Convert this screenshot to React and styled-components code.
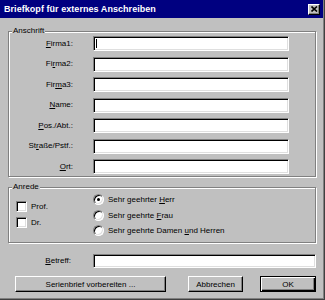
import React from 'react';
import styled, {createGlobalStyle} from 'styled-components';

const GlobalStyle = createGlobalStyle`
    html, body {
        margin: 0;
        padding: 0;
        background: #c0c0c0;
    }
    body {
        font-family: "Liberation Sans", Arial, sans-serif;
        font-size: 8px;
        color: #000;
    }
`

const Window = styled.div`
    width: 325px;
    height: 300px;
    box-sizing: border-box;
    background: #c0c0c0;
    display: flex;
    flex-direction: column;
    box-shadow: inset -1px -1px 0 #404040, inset -2px -2px 0 #808080;
    overflow: hidden;
`
const TitleBar = styled.div`
    height: 18px;
    margin-right: 2px;
    background: #000080;
    display: flex;
    align-items: center;
    justify-content: space-between;
    padding: 0 3px 0 4px;
`
const Title = styled.span`
    color: #fff;
    font-weight: bold;
    font-size: 9px;
    letter-spacing: 0.05px;
`
const CloseBox = styled.div`
    width: 12px;
    height: 11px;
    box-sizing: border-box;
    background: #c0c0c0;
    border: 1px solid;
    border-color: #fff #000 #000 #fff;
    box-shadow: inset -1px -1px 0 #808080;
    display: flex;
    align-items: center;
    justify-content: center;
`
const Body = styled.div`
    display: flex;
    flex-direction: column;
    padding: 13px 9px 0 8px;
`
const Group = styled.div`
    position: relative;
    box-sizing: border-box;
    height: ${p => p.$h}px;
    margin-top: ${p => p.$mt || 0}px;
    border: 1px solid #808080;
    box-shadow: inset 1px 1px 0 #fff, 1px 1px 0 #fff;
`
const Caption = styled.span`
    position: absolute;
    top: -6px;
    left: 3px;
    padding: 0 1px;
    line-height: 10px;
    background: #c0c0c0;
`
const FieldGrid = styled.div`
    display: grid;
    grid-template-columns: 64px 196px;
    column-gap: 20px;
    row-gap: 5.5px;
    padding-top: 4px;
`
const Label = styled.label`
    text-align: right;
    align-self: center;
    line-height: 10px;
`
const Field = styled.div`
    box-sizing: border-box;
    height: ${p => p.$h || 15}px;
    background: #fff;
    border: 1px solid;
    border-color: #808080 #fff #fff #808080;
    box-shadow: inset 1px 1px 0 #000, inset -1px -1px 0 #dfdfdf;
    display: flex;
    align-items: center;
    padding-left: 2px;
`
const Caret = styled.span`
    width: 1px;
    height: 9px;
    background: #000;
`
const AnredeGrid = styled.div`
    display: grid;
    grid-template-columns: 77px auto;
    padding: 4px 0 0 7px;
`
const Column = styled.div`
    display: flex;
    flex-direction: column;
    padding-top: ${p => p.$pt || 0}px;
`
const Option = styled.div`
    display: flex;
    align-items: center;
    height: ${p => p.$h}px;
    gap: ${p => p.$gap}px;
`
const CheckBox = styled.span`
    width: 11px;
    height: 11px;
    box-sizing: border-box;
    background: #fff;
    border: 1px solid;
    border-color: #808080 #fff #fff #808080;
    box-shadow: inset 1px 1px 0 #000, inset -1px -1px 0 #dfdfdf;
`
const Radio = styled.span`
    width: 11px;
    height: 11px;
    box-sizing: border-box;
    border-radius: 50%;
    background: #fff;
    border: 1px solid;
    border-color: #808080 #fff #fff #808080;
    box-shadow: inset 1px 1px 0 #000, inset -1px -1px 0 #dfdfdf;
    display: flex;
    align-items: center;
    justify-content: center;
    &::after {
        content: '';
        width: 3px;
        height: 3px;
        border-radius: 50%;
        background: ${p => p.$on ? '#000' : 'transparent'};
    }
`
const BetreffRow = styled.div`
    display: grid;
    grid-template-columns: 63px 223px;
    column-gap: 22px;
    margin-top: 11px;
`
const ButtonRow = styled.div`
    display: flex;
    margin-top: 8px;
    padding-left: 7px;
`
const Button = styled.button`
    box-sizing: border-box;
    height: 16px;
    width: ${p => p.$w}px;
    margin-left: ${p => p.$ml || 0}px;
    padding: 0;
    background: #c0c0c0;
    font-family: "Liberation Sans", Arial, sans-serif;
    font-size: 8px;
    color: #000;
    border: 1px solid;
    border-color: ${p => p.$default ? '#000' : '#fff #000 #000 #fff'};
    box-shadow: ${p => p.$default
        ? 'inset 1px 1px 0 #fff, inset -1px -1px 0 #000, inset -2px -2px 0 #808080'
        : 'inset -1px -1px 0 #808080'};
`

const fields = [
    ['F', 'irma1:'],
    ['Fi', 'r', 'ma2:'],
    ['Fir', 'm', 'a3:'],
    ['', 'N', 'ame:'],
    ['', 'P', 'os./Abt.:'],
    ['St', 'r', 'aße/Pstf.:'],
    ['', 'O', 'rt:'],
]

function Key({parts}) {
    if (parts.length === 2) return <><u>{parts[0]}</u>{parts[1]}</>
    return <>{parts[0]}<u>{parts[1]}</u>{parts[2]}</>
}

export default function App() {
    return (
        <>
            <GlobalStyle />
            <Window>
                <TitleBar>
                    <Title>Briefkopf für externes Anschreiben</Title>
                    <CloseBox>
                        <svg width="7" height="6" viewBox="0 0 7 6">
                            <path d="M0.5 0.5 L6 5.5 M6 0.5 L0.5 5.5" stroke="#000" strokeWidth="1.6" />
                        </svg>
                    </CloseBox>
                </TitleBar>
                <Body>
                    <Group $h={146}>
                        <Caption>Anschrift</Caption>
                        <FieldGrid>
                            {fields.map((f, i) => (
                                <React.Fragment key={i}>
                                    <Label><Key parts={f} /></Label>
                                    <Field>{i === 0 && <Caret />}</Field>
                                </React.Fragment>
                            ))}
                        </FieldGrid>
                    </Group>
                    <Group $h={56} $mt={10}>
                        <Caption>Anrede</Caption>
                        <AnredeGrid>
                            <Column $pt={6}>
                                <Option $h={16} $gap={4}><CheckBox /><span>Prof.</span></Option>
                                <Option $h={16} $gap={4}><CheckBox /><span>Dr.</span></Option>
                            </Column>
                            <Column>
                                <Option $h={15.5} $gap={4}><Radio $on /><span>Sehr geehrter <u>H</u>err</span></Option>
                                <Option $h={15.5} $gap={4}><Radio /><span>Sehr geehrte <u>F</u>rau</span></Option>
                                <Option $h={15.5} $gap={4}><Radio /><span>Sehr geehrte Damen <u>u</u>nd Herren</span></Option>
                            </Column>
                        </AnredeGrid>
                    </Group>
                    <BetreffRow>
                        <Label><u>B</u>etreff:</Label>
                        <Field $h={14} />
                    </BetreffRow>
                    <ButtonRow>
                        <Button $w={151}>Serienbrief vorbereiten ...</Button>
                        <Button $w={55} $ml={22}>Abbrechen</Button>
                        <Button $w={56} $ml={17} $default>OK</Button>
                    </ButtonRow>
                </Body>
            </Window>
        </>
    );
}
